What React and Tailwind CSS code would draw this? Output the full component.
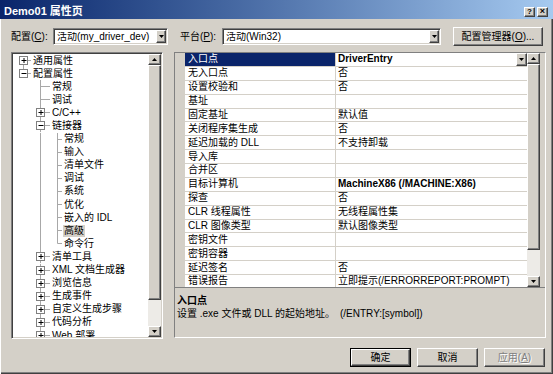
import React from 'react';

const raised =
  'border border-t-white border-l-white border-r-[#404040] border-b-[#404040] shadow-[inset_-1px_-1px_0_#808080] bg-[#d4d0c8]';
const sunken =
  'border border-t-[#808080] border-l-[#808080] border-r-white border-b-white shadow-[inset_1px_1px_0_#404040,inset_-1px_-1px_0_#d4d0c8]';

const Tri = ({ up }) => (
  <svg width="5" height="3" viewBox="0 0 5 3" className="shrink-0">
    <path d={up ? 'M2.5 0 L5 3 L0 3 Z' : 'M0 0 L5 0 L2.5 3 Z'} fill="black" />
  </svg>
);

const ScrollBar = ({ thumb }) => (
  <div className="flex w-[13px] shrink-0 flex-col">
    <div className={`${raised} flex h-[11px] shrink-0 items-center justify-center`}>
      <Tri up />
    </div>
    <div className={`${raised} shrink-0 ${thumb}`} />
    <div className="flex-1 bg-[#edebe7]" />
    <div className={`${raised} flex h-[11px] shrink-0 items-center justify-center`}>
      <Tri />
    </div>
  </div>
);

function Combo({ w, text }) {
  return (
    <div className={`${w} ${sunken} flex h-[17px] items-center bg-white p-[1px]`}>
      <span className="flex-1 truncate pl-[2px]">{text}</span>
      <div className={`${raised} flex h-full w-[10px] items-center justify-center`}>
        <Tri />
      </div>
    </div>
  );
}

// tree guide geometry, relative to the inner left edge of the tree box
const CX = [10, 27, 44];
const TX = [19, 38, 50];
const RH = 13.1;

const treeItems = [
  { level: 0, label: '通用属性', box: 'plus', first: true, next: true, guides: [] },
  { level: 0, label: '配置属性', box: 'minus', next: false, guides: [] },
  { level: 1, label: '常规', next: true, guides: [] },
  { level: 1, label: '调试', next: true, guides: [] },
  { level: 1, label: 'C/C++', box: 'plus', next: true, guides: [] },
  { level: 1, label: '链接器', box: 'minus', next: true, guides: [] },
  { level: 2, label: '常规', next: true, guides: [1] },
  { level: 2, label: '输入', next: true, guides: [1] },
  { level: 2, label: '清单文件', next: true, guides: [1] },
  { level: 2, label: '调试', next: true, guides: [1] },
  { level: 2, label: '系统', next: true, guides: [1] },
  { level: 2, label: '优化', next: true, guides: [1] },
  { level: 2, label: '嵌入的 IDL', next: true, guides: [1] },
  { level: 2, label: '高级', next: true, guides: [1], selected: true },
  { level: 2, label: '命令行', next: false, guides: [1] },
  { level: 1, label: '清单工具', box: 'plus', next: true, guides: [] },
  { level: 1, label: 'XML 文档生成器', box: 'plus', next: true, guides: [] },
  { level: 1, label: '浏览信息', box: 'plus', next: true, guides: [] },
  { level: 1, label: '生成事件', box: 'plus', next: true, guides: [] },
  { level: 1, label: '自定义生成步骤', box: 'plus', next: true, guides: [] },
  { level: 1, label: '代码分析', box: 'plus', next: true, guides: [] },
  { level: 1, label: 'Web 部署', box: 'plus', next: true, guides: [] },
];

function TreeRow({ item }) {
  const { level, label, box, next, first, guides, selected } = item;
  const w = TX[level];
  const cx = CX[level] + 0.5;
  const mid = 6.5;
  const line = '#a8a8a8';
  return (
    <div className="flex h-[13.1px] shrink-0 items-center whitespace-nowrap">
      <svg width={w} height={RH} className="shrink-0">
        {guides.map((g) => (
          <line key={g} x1={CX[g] + 0.5} y1="0" x2={CX[g] + 0.5} y2={RH} stroke={line} />
        ))}
        <line x1={cx} y1={first ? mid : 0} x2={cx} y2={next ? RH : mid} stroke={line} />
        <line x1={cx} y1={mid} x2={w - 1} y2={mid} stroke={line} />
        {box && (
          <g>
            <rect x={cx - 4} y={mid - 4} width="8" height="8" fill="white" stroke="#808080" />
            <line x1={cx - 2} y1={mid} x2={cx + 3} y2={mid} stroke="black" />
            {box === 'plus' && <line x1={cx + 0.5} y1={mid - 2.5} x2={cx + 0.5} y2={mid + 2.5} stroke="black" />}
          </g>
        )}
      </svg>
      <span className={selected ? 'bg-[#d4d0c8] px-[1px] py-[1px]' : 'px-[1px]'}>{label}</span>
    </div>
  );
}

const props = [
  ['入口点', 'DriverEntry', true],
  ['无入口点', '否'],
  ['设置校验和', '否'],
  ['基址', ''],
  ['固定基址', '默认值'],
  ['关闭程序集生成', '否'],
  ['延迟加载的 DLL', '不支持卸载'],
  ['导入库', ''],
  ['合并区', ''],
  ['目标计算机', 'MachineX86 (/MACHINE:X86)', true],
  ['探查', '否'],
  ['CLR 线程属性', '无线程属性集'],
  ['CLR 图像类型', '默认图像类型'],
  ['密钥文件', ''],
  ['密钥容器', ''],
  ['延迟签名', '否'],
  ['错误报告', '立即提示(/ERRORREPORT:PROMPT)'],
];

function TitleBar() {
  return (
    <div className="flex h-[19px] items-center bg-linear-to-r from-[#0a246a] to-[#a6caf0] pl-[4px] pr-[5px] pt-[4px]">
      <span className="text-[11px] font-bold text-white">Demo01 属性页</span>
      <div className="ml-auto flex gap-[2px]">
        <div className={`${raised} flex h-[10px] w-[11px] items-center justify-center text-[8px] font-bold`}>?</div>
        <div className={`${raised} flex h-[10px] w-[11px] items-center justify-center text-[9px] font-bold`}>×</div>
      </div>
    </div>
  );
}

export default function App() {
  return (
    <div className="relative h-[374px] w-[553px] overflow-hidden bg-[#d4d0c8] font-['Liberation_Sans','Noto_Sans_CJK_SC',sans-serif] text-[10px] leading-none text-black shadow-[inset_1px_0_0_#fff,inset_-1px_-1px_0_#404040,inset_-2px_-2px_0_#808080]">
      <TitleBar />

      {/* configuration / platform row */}
      <div className="mt-[8px] flex h-[19px] items-center pl-[11px]">
        <span className="w-[42px]">
          配置(<u>C</u>):
        </span>
        <Combo w="w-[115px]" text="活动(my_driver_dev)" />
        <span className="ml-[12px] w-[42px]">
          平台(<u>P</u>):
        </span>
        <Combo w="w-[219px]" text="活动(Win32)" />
        <div className={`${raised} ml-[12px] flex h-[19px] w-[90px] items-center justify-center`}>
          配置管理器(<u>O</u>)...
        </div>
      </div>

      <div className="mt-[6px] flex items-start">
        {/* tree */}
        <div className={`ml-[11px] flex h-[287px] w-[152px] bg-white p-[1px] ${sunken}`}>
          <div className="flex flex-1 flex-col overflow-hidden">
            {treeItems.map((it, i) => (
              <TreeRow key={i} item={it} />
            ))}
          </div>
          <ScrollBar thumb="h-[235px]" />
        </div>

        {/* property grid */}
        <div className="ml-[11px] flex h-[286px] w-[372px] flex-col border border-t-[#808080] border-l-[#808080] border-r-white border-b-white">
          <div className="flex h-[234px] shrink-0 pr-[5px]">
            <div className="w-[10px] shrink-0 bg-[#d4d0c8]" />
            <div className="flex flex-1 flex-col overflow-hidden bg-white">
              {props.map(([name, value, bold], i) => (
                <div key={i} className="flex h-[13.875px] shrink-0 items-center border-b border-[#d4d0c8] whitespace-nowrap">
                  <div
                    className={`flex h-full w-[151px] shrink-0 items-center border-r border-[#d4d0c8] pl-[3px] ${
                      i === 0 ? 'bg-[#0a246a] text-white' : ''
                    }`}
                  >
                    {name}
                  </div>
                  <div className={`flex h-full flex-1 items-center pl-[2px] ${bold ? 'font-bold' : ''}`}>
                    <span className="flex-1">{value}</span>
                    {i === 0 && (
                      <div className={`${raised} flex h-full w-[11px] items-center justify-center`}>
                        <Tri />
                      </div>
                    )}
                  </div>
                </div>
              ))}
            </div>
            <ScrollBar thumb="h-[186px]" />
          </div>
          <div className="flex-1 border-t border-[#808080] pl-[2px] pt-[6px] leading-[13px]">
            <div className="font-bold">入口点</div>
            <div className="flex whitespace-nowrap">
              <span className="w-[163px]">设置 .exe 文件或 DLL 的起始地址。</span>
              <span>(/ENTRY:[symbol])</span>
            </div>
          </div>
        </div>
      </div>

      {/* dialog buttons */}
      <div className="mt-[9px] flex h-[19px] justify-end gap-[6px] pr-[8px]">
        <div className="h-[19px] w-[61px] border border-black">
          <div className={`${raised} flex h-full w-full items-center justify-center`}>确定</div>
        </div>
        <div className={`${raised} flex h-[19px] w-[61px] items-center justify-center`}>取消</div>
        <div className={`${raised} flex h-[19px] w-[61px] items-center justify-center text-[#808080] [text-shadow:1px_1px_0_#fff]`}>
          应用(<u>A</u>)
        </div>
      </div>
    </div>
  );
}
